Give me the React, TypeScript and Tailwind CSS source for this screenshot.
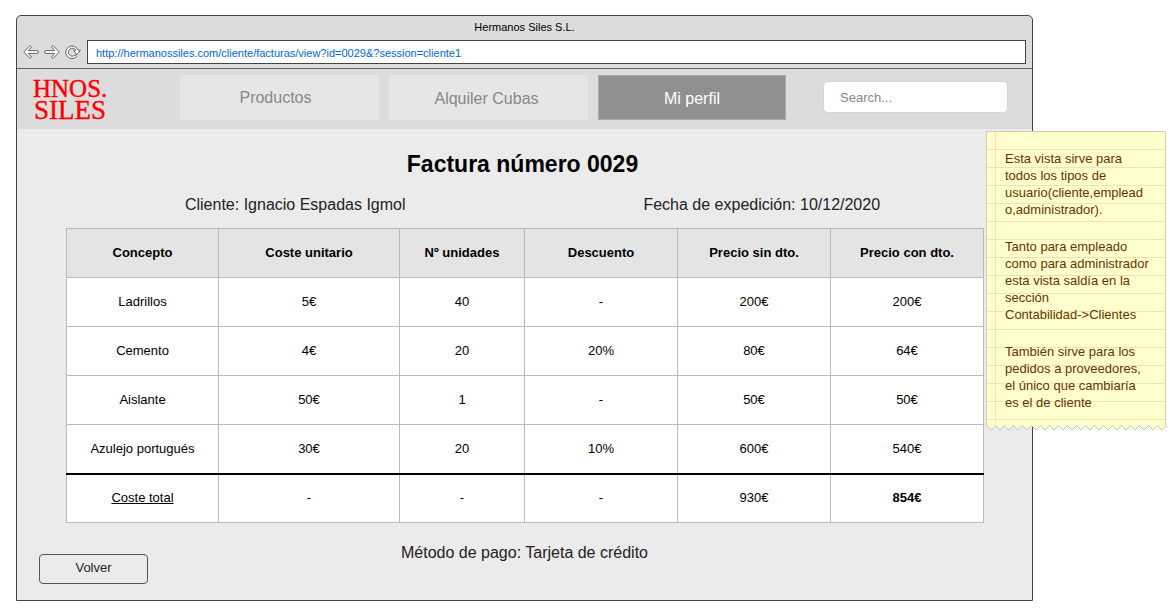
import type { ReactNode } from "react";

const columns = [
  { title: "Concepto", width: "w-[152px]" },
  { title: "Coste unitario", width: "w-[181px]" },
  { title: "Nº unidades", width: "w-[125px]" },
  { title: "Descuento", width: "w-[153px]" },
  { title: "Precio sin dto.", width: "w-[153px]" },
  { title: "Precio con dto.", width: "w-[153px]" },
];

const rows = [
  ["Ladrillos", "5€", "40", "-", "200€", "200€"],
  ["Cemento", "4€", "20", "20%", "80€", "64€"],
  ["Aislante", "50€", "1", "-", "50€", "50€"],
  ["Azulejo portugués", "30€", "20", "10%", "600€", "540€"],
];

function IconButton({ label, children }: { label: string; children: ReactNode }) {
  return (
    <button type="button" aria-label={label} className="h-4 w-4">
      <svg
        viewBox="0 0 16 16"
        className="h-4 w-4"
        fill="#ffffff"
        stroke="#666666"
        strokeWidth="1"
        strokeLinejoin="round"
      >
        {children}
      </svg>
    </button>
  );
}

function BrowserBar() {
  return (
    <div className="border-b border-[#666666] px-1.5 pb-1">
      <p className="flex h-6 items-center justify-center pb-0.5 text-[11px] text-black">Hermanos Siles S.L.</p>
      <div className="flex items-center gap-1.5">
        <div className="flex gap-[5px]">
          <IconButton label="Atrás">
            <path d="M.8 8 7 1.500l1.600 1.500L5.200 6.600H14a1.400 1.400 0 0 1 0 2.800H5.200L8.600 13 7 14.500Z" />
          </IconButton>
          <IconButton label="Adelante">
            <path d="M15.200 8 9 1.500 7.400 3l3.400 3.600H2a1.400 1.400 0 0 0 0 2.800h8.800L7.400 13 9 14.500Z" />
          </IconButton>
          <IconButton label="Recargar">
            <path d="M13 6.200A6.300 6.300 0 1 0 11.800 12.500L10.400 10.800A4 4 0 1 1 10.800 6.200H8.600l3.300 4.600 3.600-4.600Z" />
          </IconButton>
        </div>
        <input
          aria-label="Dirección"
          readOnly
          value="http://hermanossiles.com/cliente/facturas/view?id=0029&?session=cliente1"
          className="h-6 min-w-0 flex-1 border border-[#444444] bg-white px-2 pt-0.5 text-[11px] text-[#0066dd] outline-none"
        />
      </div>
    </div>
  );
}

function Logo() {
  return (
    <svg
      viewBox="0 0 80 52"
      className="h-[52px] w-20"
      fill="#ff0000"
      stroke="#ff0000"
      strokeWidth="0.4"
      fontFamily="'Liberation Serif', serif"
    >
      <text x="0" y="22" fontSize="25">
        HNOS.
      </text>
      <text x="1" y="44" fontSize="27">
        SILES
      </text>
    </svg>
  );
}

function SiteHeader() {
  return (
    <header className="flex items-start bg-[#dcdcdc] pt-1.5 pr-6 pb-0.5 pl-4">
      <a href="#inicio" className="w-[147px] shrink-0">
        <Logo />
      </a>
      <nav className="flex min-w-0 flex-1 gap-2.5 text-base">
        <a href="#productos" className="flex h-[45px] w-[199px] items-center justify-center bg-[#e6e6e6] pr-2 text-[#888888]">
          Productos
        </a>
        <a href="#alquiler" className="flex h-[45px] w-[199px] items-center justify-center bg-[#e6e6e6] pt-0.5 pr-1 text-[#888888]">
          Alquiler Cubas
        </a>
        <a
          href="#perfil"
          aria-current="page"
          className="flex h-[45px] w-[188px] items-center justify-center border border-[#aaaaaa] bg-[#909090] pt-0.5 text-white"
        >
          Mi perfil
        </a>
      </nav>
      <input
        type="search"
        aria-label="Buscar"
        placeholder="Search..."
        className="mt-1.5 h-8 w-[185px] rounded-[5px] border border-[#d4d4d4] bg-white px-4 text-[13px] text-[#333333] outline-none placeholder:text-[#888888]"
      />
    </header>
  );
}

function InvoiceTable() {
  const cell = "h-[49px] border border-[#bababa] p-0 text-center";
  const totalCell = "h-[49px] border-x border-b border-[#bababa] p-0 text-center";
  return (
    <table className="w-full table-fixed border-collapse bg-white text-[13px] leading-4 text-black">
      <thead>
        <tr className="bg-[#e4e4e4]">
          {columns.map((column) => (
            <th key={column.title} scope="col" className={`${cell} ${column.width} font-bold`}>
              {column.title}
            </th>
          ))}
        </tr>
      </thead>
      <tbody>
        {rows.map((row) => (
          <tr key={row[0]}>
            {row.map((value, index) => (
              <td key={index} className={cell}>
                {value}
              </td>
            ))}
          </tr>
        ))}
      </tbody>
      <tfoot>
        <tr className="border-t-2 border-t-black">
          <td className={`${totalCell} underline`}>Coste total</td>
          <td className={totalCell}>-</td>
          <td className={totalCell}>-</td>
          <td className={totalCell}>-</td>
          <td className={totalCell}>930€</td>
          <td className={`${totalCell} font-bold`}>854€</td>
        </tr>
      </tfoot>
    </table>
  );
}

const tornEdge =
  "M.5 0V3" +
  Array.from({ length: 20 }, (_, i) => `L${5 + i * 9} 8L${9.5 + i * 9} 3.500`).join("") +
  "L179.500 3V0";

function StickyNote() {
  return (
    <aside className="absolute top-[131px] right-1 w-[180px] text-[13px] leading-[17px] text-[#663300]">
      <div className="relative flex flex-col gap-5 border-x border-t border-[#d0d0b8] bg-[#ffffcc] bg-[repeating-linear-gradient(to_bottom,transparent_0px,transparent_17px,#e6e6b8_17px,#e6e6b8_18px)] pt-[18px] pr-3 pb-[11px] pl-[18px] before:absolute before:inset-y-0 before:left-2 before:w-px before:bg-[#ffddb0]">
        <p>
          Esta vista sirve para
          <br />
          todos los tipos de
          <br />
          usuario(cliente,emplead
          <br />
          o,administrador).
        </p>
        <p>
          Tanto para empleado
          <br />
          como para administrador
          <br />
          esta vista saldía en la
          <br />
          sección
          <br />
          Contabilidad-&gt;Clientes
        </p>
        <p>
          También sirve para los
          <br />
          pedidos a proveedores,
          <br />
          el único que cambiaría
          <br />
          es el de cliente
        </p>
      </div>
      <svg viewBox="0 0 180 9" className="block w-full" fill="#ffffcc" stroke="#c8c8b4" aria-hidden="true">
        <path d={tornEdge} />
      </svg>
    </aside>
  );
}

export default function App() {
  return (
    <div className="relative bg-white pt-[15px] pr-[137px] pb-2 pl-4 font-['Liberation_Sans',Arial,sans-serif]">
      <div className="overflow-hidden rounded-t-[5px] border border-[#444444] bg-[#dcdcdc]">
        <BrowserBar />
        <SiteHeader />
        <main className="bg-[#ebebeb] px-[49px] pt-[19px] pb-4 text-[#222222]">
          <h1 className="pr-1 text-center text-[23px] leading-8 font-bold text-black">Factura número 0029</h1>
          <div className="grid grid-cols-2 pt-[13px] pb-[11px] text-base leading-6">
            <p className="text-center">Cliente: Ignacio Espadas Igmol</p>
            <p className="pl-4 text-center">Fecha de expedición: 10/12/2020</p>
          </div>
          <InvoiceTable />
          <p className="pt-[18px] text-center text-base leading-6">Método de pago: Tarjeta de crédito</p>
          <button
            type="button"
            className="-mt-[11px] -ml-[27px] block h-[30px] w-[109px] rounded-[4px] border border-[#555555] pb-0.5 text-[13px]"
          >
            Volver
          </button>
        </main>
      </div>
      <StickyNote />
    </div>
  );
}
